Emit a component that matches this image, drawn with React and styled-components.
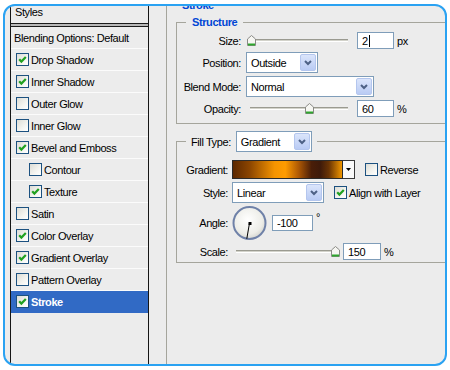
import React from "react";
import styled, { createGlobalStyle } from "styled-components";

const Global = createGlobalStyle`
  html, body { margin: 0; padding: 0; background: #fff; }
  body { font-family: "Liberation Sans", Arial, sans-serif; font-size: 11px; color: #000; }
`;

const Frame = styled.div`
  box-sizing: border-box;
  margin: 4px 0 0 3px;
  width: 444px;
  height: 362px;
  border: 2px solid #2aa2f2;
  border-radius: 12px;
  background: #ececec;
  overflow: hidden;
  display: flex;
  padding-left: 5px;
  font-family: "Liberation Sans", Arial, sans-serif;
  font-size: 11px;
  letter-spacing: -0.4px;
  color: #000;
`;

/* ---------- left styles list ---------- */
const StylesPanel = styled.div`
  box-sizing: border-box;
  width: 139px;
  flex: none;
  border-left: 1px solid #151515;
  border-right: 1px solid #151515;
  display: flex;
  flex-direction: column;
`;

const PanelHeader = styled.div`
  height: 17px;
  line-height: 13px;
  padding-left: 4px;
`;

const DoubleRule = styled.div`
  box-sizing: border-box;
  height: 4px;
  border-top: 1px solid #1a1a1a;
  border-bottom: 1px solid #1a1a1a;
  background: #b8b8b8;
`;

const Row = styled.div`
  box-sizing: border-box;
  height: 22px;
  display: flex;
  align-items: center;
  gap: 2px;
  padding-left: ${(p) => p.$pad}px;
  border-bottom: 1px solid ${(p) => (p.$selected ? "#316ac5" : "#fbfbfb")};
  background: ${(p) => (p.$selected ? "#316ac5" : "transparent")};
  color: ${(p) => (p.$selected ? "#fff" : "#000")};
  font-weight: ${(p) => (p.$selected ? "bold" : "normal")};
  white-space: nowrap;
`;

const Box = styled.span`
  box-sizing: border-box;
  width: 13px;
  height: 13px;
  flex: none;
  border: 1px solid #1c5180;
  background: linear-gradient(135deg, #dcdcd5 0%, #f4f4f0 60%, #ffffff 100%);
  display: inline-flex;
  align-items: center;
  justify-content: center;
`;

const Checkbox = ({ checked }) => (
  <Box>
    {checked && (
      <svg width="9" height="9" viewBox="0 0 9 9">
        <polyline points="1.2,4.2 3.4,6.6 7.8,2" fill="none" stroke="#21a121" strokeWidth="2.2" />
      </svg>
    )}
  </Box>
);

/* ---------- right options ---------- */
const Content = styled.div`
  flex: 1;
  min-width: 0;
  padding-left: 17px;
  margin-top: -8px;
`;

const Group = styled.fieldset`
  box-sizing: border-box;
  margin: ${(p) => p.$mt || 0}px 0 0 0;
  padding: ${(p) => p.$pad};
  min-width: 0;
  width: ${(p) => p.$w}px;
  height: ${(p) => (p.$h ? `${p.$h}px` : "auto")};
  border: 1px solid #a5a59c;
`;

const Legend = styled.legend`
  margin-left: ${(p) => p.$ml}px;
  padding: 0 ${(p) => p.$px}px;
  line-height: 14px;
  font-weight: ${(p) => (p.$title ? "bold" : "normal")};
  color: ${(p) => (p.$title ? "#0046d5" : "#000")};
`;

const LegendRow = styled.span`
  display: flex;
  align-items: center;
  gap: 5px;
`;

const Form = styled.div`
  display: grid;
  grid-template-columns: ${(p) => p.$label}px auto;
  column-gap: ${(p) => p.$gap}px;
  row-gap: 3px;
  align-items: center;
`;

const Label = styled.span`
  text-align: right;
  white-space: nowrap;
`;

const Controls = styled.div`
  display: flex;
  align-items: center;
  white-space: nowrap;
`;

const SelectBox = styled.div`
  box-sizing: border-box;
  width: ${(p) => p.$w}px;
  height: 21px;
  flex: none;
  border: 1px solid #7f9db9;
  background: #fff;
  display: flex;
  align-items: center;
  padding: 1px 1px 1px 4px;
`;

const SelectText = styled.span`
  flex: 1;
`;

const SelectButton = styled.span`
  box-sizing: border-box;
  width: 16px;
  height: 17px;
  border: 1px solid #b4c6ee;
  border-radius: 2px;
  background: linear-gradient(#dbe5fb, #b9cbf4);
  display: flex;
  align-items: center;
  justify-content: center;
`;

const Select = ({ w, value }) => (
  <SelectBox $w={w}>
    <SelectText>{value}</SelectText>
    <SelectButton>
      <svg width="8" height="6" viewBox="0 0 8 6">
        <polyline points="1,1 4,4 7,1" fill="none" stroke="#4d6185" strokeWidth="2" />
      </svg>
    </SelectButton>
  </SelectBox>
);

const Field = styled.div`
  box-sizing: border-box;
  width: ${(p) => p.$w}px;
  height: ${(p) => p.$h || 17}px;
  flex: none;
  margin-left: ${(p) => p.$ml || 0}px;
  border: 1px solid #7f9db9;
  background: #fff;
  padding-left: 4px;
  display: flex;
  align-items: center;
`;

const Caret = styled.span`
  width: 1px;
  height: 12px;
  margin-left: 1px;
  background: #000;
`;

const Unit = styled.span`
  margin-left: 3px;
  padding-bottom: ${(p) => (p.$raised ? "12px" : "0")};
  line-height: ${(p) => (p.$raised ? "8px" : "normal")};
`;

const SliderBox = styled.div`
  width: ${(p) => p.$w}px;
  height: 17px;
  flex: none;
  display: flex;
  align-items: center;
`;

const Track = styled.div`
  position: relative;
  flex: 1;
  margin: 0 4px;
  box-sizing: border-box;
  height: 3px;
  border-top: 1px solid #9a9a90;
  border-bottom: 1px solid #ffffff;
  background: #d2d2ca;
`;

const Thumb = styled.svg`
  position: absolute;
  top: -5px;
  margin-left: -4px;
`;

const Slider = ({ w, pct }) => (
  <SliderBox $w={w}>
    <Track>
      <Thumb width="9" height="11" viewBox="0 0 9 11" style={{ left: `${pct}%` }}>
        <path d="M0.5 4 L4.5 0.5 L8.5 4 V10.5 H0.5 Z" fill="#f6f6f2" stroke="#8a8a86" />
        <rect x="1" y="8.5" width="7" height="2" fill="#2ea62e" />
      </Thumb>
    </Track>
  </SliderBox>
);

const Swatch = styled.div`
  box-sizing: border-box;
  width: 111px;
  height: 19px;
  border: 1px solid #2a2a2a;
  background: linear-gradient(
    to right,
    #5c2800 0%,
    #8a4400 15%,
    #f59400 38%,
    #ff9c00 48%,
    #b05a04 60%,
    #4a1e08 72%,
    #3e1a0a 80%,
    #6a3404 88%,
    #f09600 100%
  );
`;

const SwatchButton = styled.span`
  box-sizing: border-box;
  width: 12px;
  height: 19px;
  border: 1px solid #3a3a3a;
  border-left: none;
  background: #fafafa;
  display: flex;
  align-items: center;
  justify-content: center;
`;

const CheckLabel = styled.span`
  display: flex;
  align-items: center;
  gap: 2px;
  margin-left: ${(p) => p.$ml}px;
`;

const Dial = () => (
  <svg width="35" height="34" viewBox="0 0 35 34">
    <defs>
      <radialGradient id="dialFace" cx="0.45" cy="0.4" r="0.6">
        <stop offset="0" stopColor="#ffffff" />
        <stop offset="0.75" stopColor="#ededE8" />
        <stop offset="1" stopColor="#d6d6d0" />
      </radialGradient>
    </defs>
    <circle cx="17.5" cy="17" r="16" fill="url(#dialFace)" stroke="#6f81a8" strokeWidth="2" />
    <line x1="17.5" y1="17" x2="14.8" y2="32.8" stroke="#000" strokeWidth="1" />
    <rect x="16.5" y="16" width="3" height="3" fill="#000" />
  </svg>
);

const styleRows = [
  { label: "Drop Shadow", checked: true },
  { label: "Inner Shadow", checked: true },
  { label: "Outer Glow" },
  { label: "Inner Glow" },
  { label: "Bevel and Emboss", checked: true },
  { label: "Contour", indent: true },
  { label: "Texture", checked: true, indent: true },
  { label: "Satin" },
  { label: "Color Overlay", checked: true },
  { label: "Gradient Overlay", checked: true },
  { label: "Pattern Overlay" },
  { label: "Stroke", checked: true, selected: true },
];

export default function App() {
  return (
    <>
      <Global />
      <Frame>
        <StylesPanel>
          <PanelHeader>Styles</PanelHeader>
          <DoubleRule />
          <Row $pad={3}>Blending Options: Default</Row>
          {styleRows.map((r) => (
            <Row key={r.label} $pad={r.indent ? 18 : 5} $selected={r.selected}>
              <Checkbox checked={r.checked} />
              <span>{r.label}</span>
            </Row>
          ))}
        </StylesPanel>

        <Content>
          <Group $w={310} $h={420} $pad="0 0 0 9px">
            <Legend $title $ml={3} $px={3}>Stroke</Legend>

            <Group $mt={3} $w={300} $pad="3px 0 6px 0">
              <Legend $title $ml={9} $px={6}>Structure</Legend>
              <Form $label={64} $gap={5}>
                <Label>Size:</Label>
                <Controls>
                  <Slider w={106} pct={1} />
                  <Field $w={37} $ml={5}>
                    2<Caret />
                  </Field>
                  <Unit>px</Unit>
                </Controls>

                <Label>Position:</Label>
                <Controls>
                  <Select w={72} value="Outside" />
                </Controls>

                <Label>Blend Mode:</Label>
                <Controls>
                  <Select w={128} value="Normal" />
                </Controls>

                <Label>Opacity:</Label>
                <Controls>
                  <Slider w={106} pct={60} />
                  <Field $w={37} $ml={5}>60</Field>
                  <Unit>%</Unit>
                </Controls>
              </Form>
            </Group>

            <Group $mt={7} $w={300} $pad="8px 0 2px 0">
              <Legend $ml={9} $px={5}>
                <LegendRow>
                  <span>Fill Type:</span>
                  <Select w={76} value="Gradient" />
                </LegendRow>
              </Legend>
              <Form $label={51} $gap={4}>
                <Label>Gradient:</Label>
                <Controls>
                  <Swatch />
                  <SwatchButton>
                    <svg width="5" height="3" viewBox="0 0 5 3">
                      <polygon points="0,0 5,0 2.5,3" fill="#000" />
                    </svg>
                  </SwatchButton>
                  <CheckLabel $ml={10}>
                    <Checkbox />
                    <span>Reverse</span>
                  </CheckLabel>
                </Controls>

                <Label>Style:</Label>
                <Controls>
                  <Select w={92} value="Linear" />
                  <CheckLabel $ml={10}>
                    <Checkbox checked />
                    <span>Align with Layer</span>
                  </CheckLabel>
                </Controls>

                <Label>Angle:</Label>
                <Controls>
                  <Dial />
                  <Field $w={41} $h={16} $ml={5}>-100</Field>
                  <Unit $raised>°</Unit>
                </Controls>

                <Label>Scale:</Label>
                <Controls>
                  <Slider w={107} pct={100} />
                  <Field $w={38} $ml={4}>150</Field>
                  <Unit>%</Unit>
                </Controls>
              </Form>
            </Group>
          </Group>
        </Content>
      </Frame>
    </>
  );
}
